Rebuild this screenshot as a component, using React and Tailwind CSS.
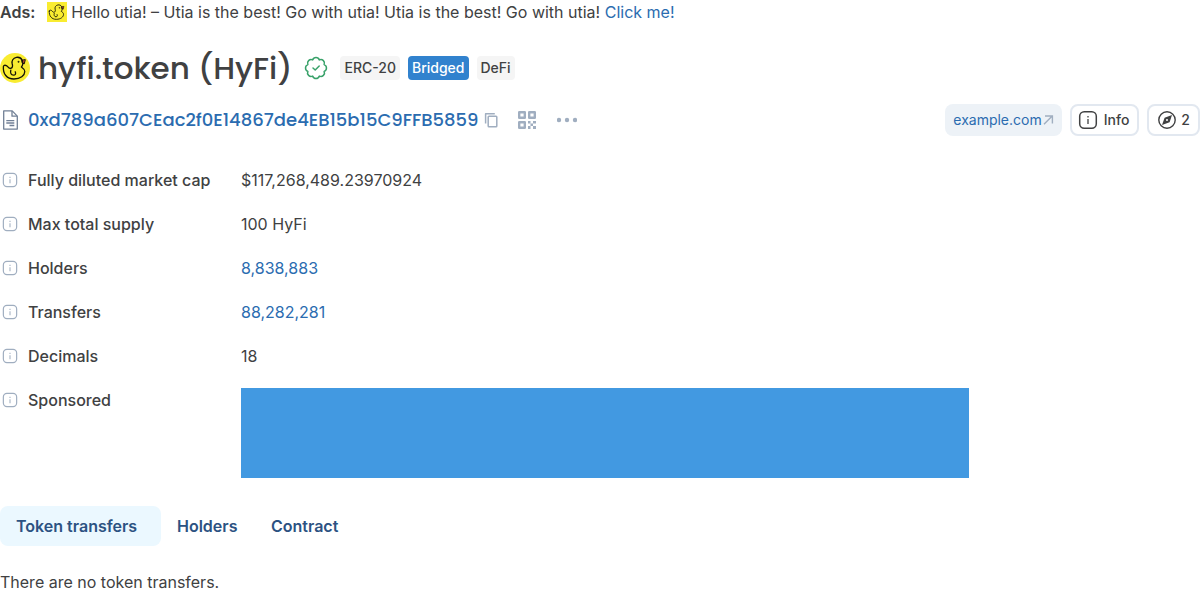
import React from 'react';

function DuckDrawing() {
  return (
    <g fill="none" stroke="#141208" strokeWidth="1.3" strokeLinecap="round" strokeLinejoin="round">
      <path d="M22 7.200 25.300 6.600 24.300 10.800 22.600 10.200Z" fill="#ef5a3c" strokeWidth="1" />
      <path d="M3.400 13.600C2.800 20.800 6.800 26 14 26 20.400 26 24.800 22.400 24.800 18.600 24.800 16.400 23.400 15.400 21.400 14 23 12 23.200 9.400 22.200 7.200 21 4.900 18.600 4 16.400 4.400 13 5 11.400 8 12.200 10.800 12.900 13 12.600 15 10.600 15.400 8.400 15.600 8.400 13.600 6.400 12.600 4.800 11.800 3.500 12.400 3.400 13.600Z" />
      <path d="M10.800 17.200C10 20 11.200 22.200 13.400 22.200 15.400 22.200 16.200 20.600 15.200 18.800" />
      <circle cx="18.400" cy="8.800" r=".6" fill="#141208" strokeWidth=".5" />
    </g>
  );
}

function Duck({ round, className }) {
  return (
    <svg viewBox="0 0 30 30" className={className} aria-hidden="true">
      {round ? <circle cx="15" cy="15" r="15" fill="#f9ec31" /> : <rect width="30" height="30" fill="#f9ec31" />}
      <DuckDrawing />
    </svg>
  );
}

function InfoIcon({ className }) {
  return (
    <svg viewBox="0 0 20 20" className={className} fill="none" stroke="currentColor" aria-hidden="true">
      <rect x="1.700" y="1.700" width="16.600" height="16.600" rx="4.500" strokeWidth="1.500" />
      <path d="M10 9v5" strokeWidth="1.300" />
      <path d="M10 6v1.500" strokeWidth="1.300" />
    </svg>
  );
}

function VerifiedIcon() {
  return (
    <svg viewBox="0 0 24 24" className="size-6 text-[#38a169]" fill="none" stroke="currentColor" strokeWidth="1.5" strokeLinecap="round" strokeLinejoin="round" role="img" aria-label="Verified">
      <path d="M8.630 3.870A3.600 3.600 0 0 1 15.370 3.870 3.600 3.600 0 0 1 20.130 8.630 3.600 3.600 0 0 1 20.130 15.370 3.600 3.600 0 0 1 15.370 20.130 3.600 3.600 0 0 1 8.630 20.130 3.600 3.600 0 0 1 3.870 15.370 3.600 3.600 0 0 1 3.870 8.630 3.600 3.600 0 0 1 8.630 3.870Z" />
      <path d="M9 12 11.200 14 15.200 10" />
    </svg>
  );
}

function ContractIcon() {
  return (
    <svg viewBox="0 0 20 20" className="size-5 text-[#718096]" fill="none" stroke="currentColor" strokeWidth="1.300" strokeLinejoin="round" aria-hidden="true">
      <path d="M3.700.9h8.500l5.100 5.200v13H3.700z" />
      <path d="M12 1v5.200h5.200M6.300 10.700h8M6.300 13h8M9.500 15.500h4.800" />
    </svg>
  );
}

function CopyIcon() {
  return (
    <svg viewBox="0 0 20 20" className="size-5" fill="none" stroke="currentColor" strokeWidth="1.500" strokeLinejoin="round" aria-hidden="true">
      <path d="M4.600 13.500V3.700h9.200" />
      <rect x="7.200" y="6.300" width="8.600" height="10.500" rx=".8" />
    </svg>
  );
}

function QrIcon() {
  return (
    <svg viewBox="0 0 20 20" className="size-5" aria-hidden="true">
      <g fill="none" stroke="currentColor" strokeWidth="2.400" strokeLinejoin="round">
        <rect x="2.200" y="2.200" width="5.600" height="5.600" />
        <rect x="12.200" y="2.200" width="5.600" height="5.600" />
        <rect x="2.200" y="12.200" width="5.600" height="5.600" />
      </g>
      <path fill="currentColor" d="M11 11h2.500v2.500H11zM13.500 13.500H16V16h-2.500zM16 11h3v2.500h-3zM11 16h2.500v3H11zM16 16h3v3h-3z" />
    </svg>
  );
}

function DotsIcon() {
  return (
    <svg viewBox="0 0 20 20" className="size-5" fill="currentColor" aria-hidden="true">
      <circle cx="2" cy="10" r="2.200" />
      <circle cx="10" cy="10" r="2.200" />
      <circle cx="18" cy="10" r="2.200" />
    </svg>
  );
}

function ArrowIcon() {
  return (
    <svg viewBox="0 0 12 12" className="size-3 text-[#a0aec0]" fill="none" stroke="currentColor" strokeWidth="1.400" aria-hidden="true">
      <path d="M2 10.200 10.200 2M3 2h7.400v7.400" />
    </svg>
  );
}

function CompassIcon() {
  return (
    <svg viewBox="0 0 20 20" className="size-5" fill="none" stroke="currentColor" aria-hidden="true">
      <circle cx="10" cy="10" r="8.200" strokeWidth="1.400" />
      <path fillRule="evenodd" fill="currentColor" stroke="none" d="M15 5 12.600 12.300 5 15 7.600 7.700ZM10 9a1 1 0 1 0 0 2 1 1 0 0 0 0-2Z" />
    </svg>
  );
}

const facts = [
  { label: 'Fully diluted market cap', value: '$117,268,489.23970924' },
  { label: 'Max total supply', value: '100 HyFi' },
  { label: 'Holders', value: '8,838,883', link: true },
  { label: 'Transfers', value: '88,282,281', link: true },
  { label: 'Decimals', value: '18' },
];

function Label({ children }) {
  return (
    <dt className="flex h-6 items-center gap-2 font-medium whitespace-nowrap">
      <span className="flex w-5 shrink-0 justify-center text-[#a0aec0]">
        <InfoIcon className="size-4" />
      </span>
      {children}
    </dt>
  );
}

export default function App() {
  return (
    <main className="bg-white font-['Inter',sans-serif] text-base text-[#404142]">
      <p className="flex h-6 items-center whitespace-nowrap">
        <strong className="mr-3 font-semibold">Ads:</strong>
        <Duck className="mr-1 size-5" />
        <span>
          Hello utia! – Utia is the best! Go with utia! Utia is the best! Go with utia!{' '}
          <a href="#ad" className="text-[#2b6cb0]">Click me!</a>
        </span>
      </p>

      <header className="mt-6 flex h-10 items-center gap-2">
        <Duck round className="size-[30px] shrink-0" />
        <h1 className="font-['Poppins','Inter',sans-serif] text-[31px] leading-10 font-medium whitespace-nowrap">hyfi.token (HyFi)</h1>
        <span className="mx-1"><VerifiedIcon /></span>
        <ul className="flex gap-2 text-sm leading-6 font-medium">
          <li className="rounded-sm bg-[#f5f5f5] px-1">ERC-20</li>
          <li className="rounded-sm bg-[#3182ce] px-1 text-white">Bridged</li>
          <li className="rounded-sm bg-[#f5f5f5] px-1">DeFi</li>
        </ul>
      </header>

      <section className="mt-4 flex h-8 items-center text-[#a0aec0]">
        <ContractIcon />
        <a href="#address" className="ml-2 font-['Poppins','Inter',sans-serif] text-lg leading-6 font-medium text-[#2b6cb0]">
          0xd789a607CEac2f0E14867de4EB15b15C9FFB5859
        </a>
        <button type="button" aria-label="Copy address" className="ml-0.5"><CopyIcon /></button>
        <button type="button" aria-label="Show QR code" className="ml-4"><QrIcon /></button>
        <button type="button" aria-label="More actions" className="ml-5"><DotsIcon /></button>
        <div className="ml-auto flex gap-2 text-sm">
          <a href="#site" className="flex h-8 items-center rounded-lg bg-[#edf2f7] px-2 text-[#2b6cb0]">
            example.com<ArrowIcon />
          </a>
          <button type="button" className="flex h-8 items-center gap-1.5 rounded-lg border-2 border-[#e2e8f0] pr-2 pl-1.5 font-medium text-[#404142]">
            <InfoIcon className="size-5" />Info
          </button>
          <button type="button" className="flex h-8 items-center gap-1 rounded-lg border-2 border-[#e2e8f0] px-2 font-medium text-[#404142]">
            <CompassIcon />2
          </button>
        </div>
      </section>

      <dl className="mt-8 grid grid-cols-[209px_1fr] gap-x-8 gap-y-5">
        {facts.map((fact) => (
          <React.Fragment key={fact.label}>
            <Label>{fact.label}</Label>
            <dd>{fact.link ? <a href="#details" className="text-[#2b6cb0]">{fact.value}</a> : fact.value}</dd>
          </React.Fragment>
        ))}
        <Label>Sponsored</Label>
        <dd><div className="h-[90px] max-w-[728px] bg-[#4299e1]" /></dd>
      </dl>

      <div role="tablist" className="mt-7 grid h-10 grid-cols-[161px_94px_104px] font-semibold text-[#2c5282]">
        <button type="button" role="tab" aria-selected="true" className="rounded-lg bg-[#ebf8ff] px-4 text-left">Token transfers</button>
        <button type="button" role="tab" aria-selected="false" className="px-4 text-left">Holders</button>
        <button type="button" role="tab" aria-selected="false" className="px-4 text-left">Contract</button>
      </div>
      <p role="tabpanel" className="mt-6">There are no token transfers.</p>
    </main>
  );
}
